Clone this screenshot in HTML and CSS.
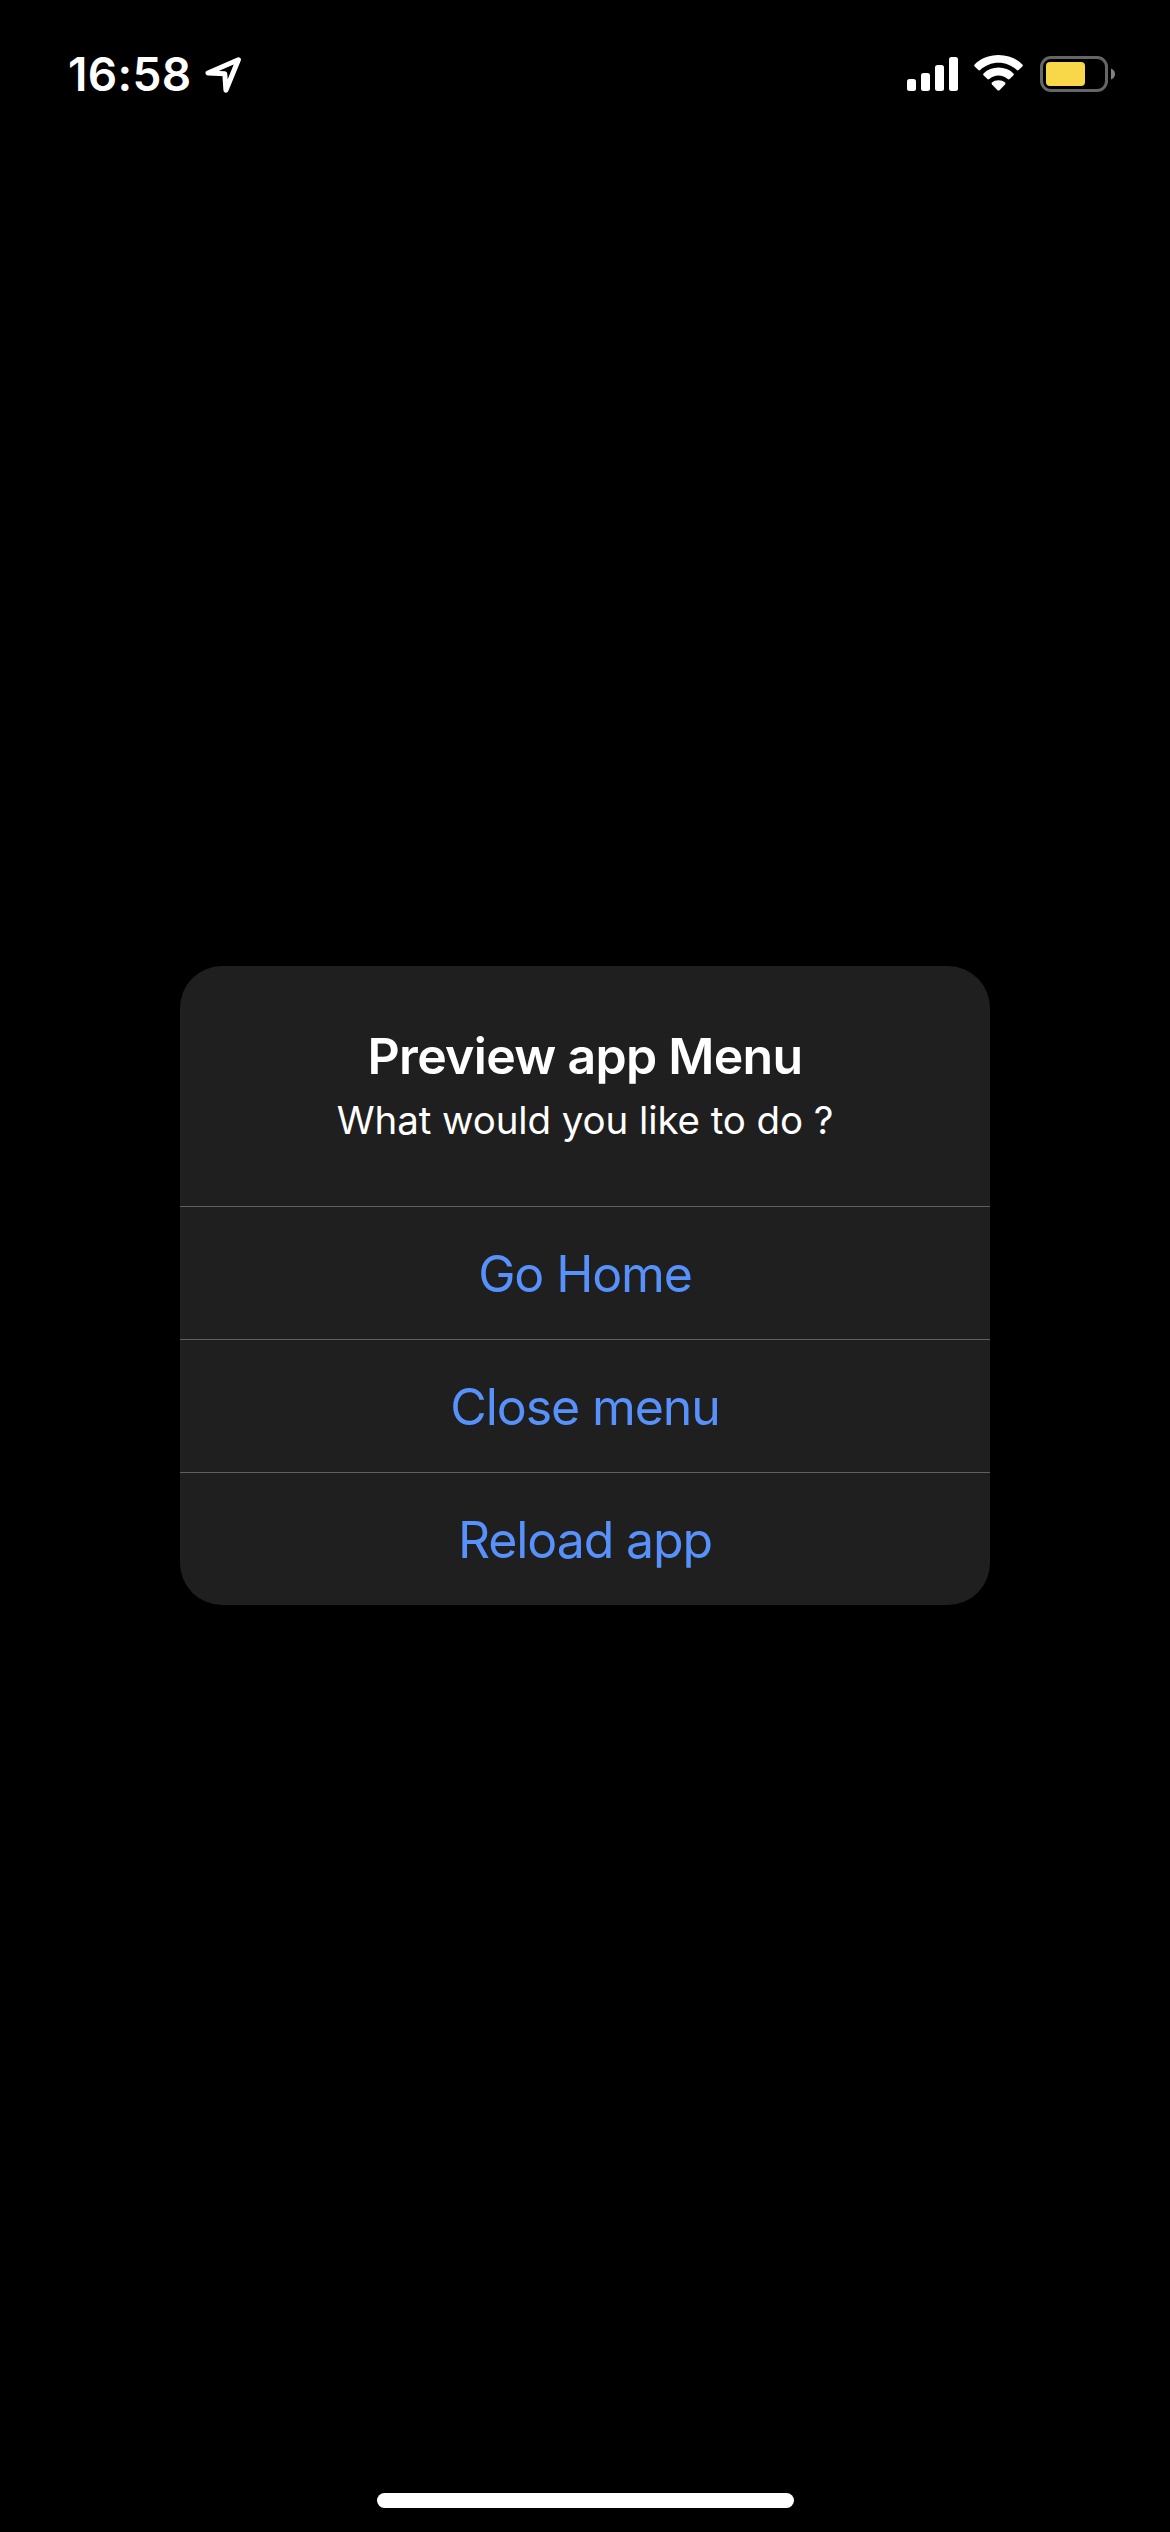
FILE: index.html
```html
<!DOCTYPE html>
<html lang="en">
<head>
<meta charset="utf-8">
<title>Preview app Menu</title>
<link rel="stylesheet" href="styles.css">
</head>
<body>
<header class="status-bar">
  <div class="status-left">
    <span class="time">16:58</span>
    <svg class="location" width="37" height="38" viewBox="0 0 37 38"><path d="M33.4 3.8 L3 17 L19.8 17.8 L20.9 34.2 Z" fill="none" stroke="#fff" stroke-width="5" stroke-linejoin="round"/></svg>
  </div>
  <div class="status-right">
    <svg class="signal" width="51" height="34" viewBox="0 0 51 34" fill="#fff"><rect y="22" width="9" height="12" rx="2.5"/><rect x="14" y="16" width="9" height="18" rx="2.5"/><rect x="28" y="8" width="9" height="26" rx="2.5"/><rect x="42" width="9" height="34" rx="2.5"/></svg>
    <svg class="wifi" width="49" height="36" viewBox="0 0 49 36" fill="#fff"><path d="M24.5 0C34 0 42.5 3.5 48.4 9.5Q49.2 10.5 48.3 11.4L44.6 15.1Q43.7 15.8 42.8 15C37.8 10.4 31.4 7.8 24.5 7.8S11.2 10.4 6.2 15Q5.3 15.8 4.4 15.1L.7 11.4Q-.2 10.5.6 9.5C6.5 3.5 15 0 24.5 0Z"/><path d="M24.5 12.6C30.3 12.6 35.5 14.7 39.5 18.4Q40.4 19.3 39.5 20.3L35.6 24.1Q34.7 24.9 33.7 24.1C31.2 21.9 28 20.6 24.5 20.6S17.8 21.9 15.3 24.1Q14.3 24.9 13.4 24.1L9.5 20.3Q8.6 19.3 9.5 18.4C13.5 14.7 18.7 12.6 24.5 12.6Z"/><path d="M24.5 25.3C27.2 25.3 29.2 26.1 31 27.5Q31.9 28.4 31 29.4L25.5 35.2Q24.5 36 23.5 35.2L18 29.4Q17.1 28.4 18 27.5C19.8 26.1 21.8 25.3 24.5 25.3Z"/></svg>
    <svg class="battery" width="75" height="36" viewBox="0 0 75 36"><rect x="1.5" y="1.5" width="65" height="33" rx="9.5" fill="none" stroke="#666" stroke-width="3"/><rect x="6" y="6" width="39" height="24" rx="4" fill="#f8d749"/><path d="M71 12.5Q75 14 75 18T71 23.5Z" fill="#808080"/></svg>
  </div>
</header>
<main class="stage">
  <section class="alert" role="alertdialog" aria-labelledby="alert-title">
    <div class="message">
      <h1 id="alert-title" class="title">Preview app Menu</h1>
      <p class="subtitle">What would you like to do ?</p>
    </div>
    <button class="action">Go Home</button>
    <button class="action">Close menu</button>
    <button class="action">Reload app</button>
  </section>
</main>
<footer class="home-area"><div class="home-indicator"></div></footer>
</body>
</html>
```
FILE: styles.css
```css
* { box-sizing: border-box; }
body {
  margin: 0;
  height: 2532px;
  display: flex;
  flex-direction: column;
  background: #000;
  color: #fff;
  font-family: Inter, "Liberation Sans", sans-serif;
  overflow: hidden;
}
.status-bar {
  height: 141px;
  display: flex;
  justify-content: space-between;
  padding: 55px 55px 0 68px;
}
.status-left, .status-right { display: flex; align-items: flex-start; }
.time {
  width: 137px;
  line-height: 39px;
  font-size: 46px;
  font-weight: 600;
  letter-spacing: 0.3px;
  white-space: nowrap;
}
.location { margin-top: 1px; }
.signal { margin-top: 2px; }
.wifi { margin-left: 16px; }
.battery { margin: 1px 0 0 17px; }
.stage {
  flex: 1;
  display: flex;
  justify-content: center;
  align-items: flex-start;
  padding-top: 825px;
}
.alert {
  width: 810px;
  height: 639px;
  display: flex;
  flex-direction: column;
  background: #1f1f1f;
  border-radius: 42px;
  overflow: hidden;
}
.message {
  height: 240px;
  padding-top: 60px;
  text-align: center;
}
.title {
  margin: 0;
  font-size: 50px;
  line-height: 60px;
  font-weight: 600;
  letter-spacing: -0.7px;
}
.subtitle {
  margin: 10px 0 0;
  font-size: 38.5px;
  line-height: 48px;
  letter-spacing: -0.1px;
}
.action {
  height: 133px;
  padding: 2px 0 0;
  border: 0;
  border-top: 1px solid #606060;
  background: none;
  color: #5791fb;
  font: 400 50px/60px Inter, "Liberation Sans", sans-serif;
  letter-spacing: -1.1px;
}
.home-area {
  height: 39px;
  display: flex;
  justify-content: center;
}
.home-indicator {
  width: 417px;
  height: 15px;
  border-radius: 8px;
  background: #fff;
}
```
